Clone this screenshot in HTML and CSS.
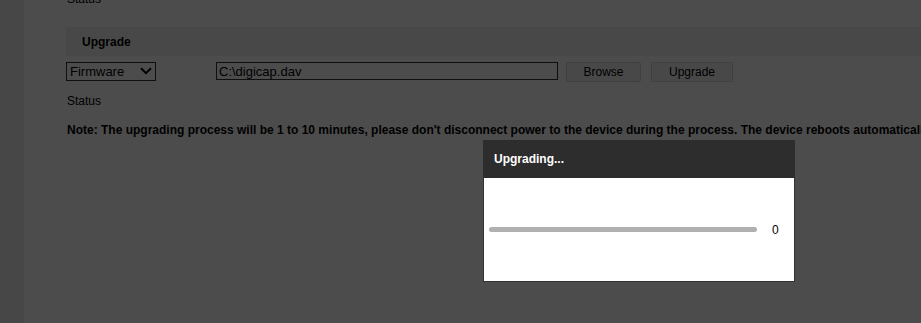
FILE: index.html
```html
<!DOCTYPE html>
<html lang="en">
<head>
    <meta charset="UTF-8">
    <meta name="viewport" content="width=device-width, initial-scale=1.0">
    <title>Upgrade</title>
    <link rel="stylesheet" href="styles.css">
</head>
<body>
    <div class="page">
        <div class="sidebar"></div>
        <div class="content">
            <div class="line status-top">Status</div>
            <div class="section-title">Upgrade</div>
            <div class="upgrade-row">
                <span class="select-wrap">
                    <select class="type-select">
                        <option>Firmware</option>
                    </select>
                    <svg class="chevron" width="12" height="8" viewBox="0 0 12 8">
                        <path d="M1 1.2 L6 6.2 L11 1.2" fill="none" stroke="#000" stroke-width="2"/>
                    </svg>
                </span>
                <input class="file-path" type="text" value="C:\digicap.dav">
                <button class="btn btn-browse">Browse</button>
                <button class="btn btn-upgrade">Upgrade</button>
            </div>
            <div class="line status">Status</div>
            <div class="line note">Note: The upgrading process will be 1 to 10 minutes, please don't disconnect power to the device during the process. The device reboots automatically after upgrading.</div>
        </div>
    </div>

    <div class="mask"></div>

    <div class="dialog">
        <div class="dialog-head">Upgrading...</div>
        <div class="dialog-body">
            <div class="progress"></div>
            <span class="progress-value">0</span>
        </div>
    </div>
</body>
</html>
```

FILE: styles.css
```css
* {
    box-sizing: border-box;
}

html, body {
    margin: 0;
    padding: 0;
    height: 100%;
    overflow: hidden;
    font-family: "Liberation Sans", Arial, sans-serif;
    font-size: 12px;
    color: #000;
    background: #fff;
}

.page {
    display: flex;
    min-height: 100%;
}

.sidebar {
    width: 24px;
    flex: none;
    background: #ededed;
}

.content {
    flex: 1;
    padding-left: 42px;
    white-space: nowrap;
}

.line {
    height: 20px;
    line-height: 20px;
    padding-left: 1px;
}

.status-top {
    margin-top: -11px;
}

.section-title {
    margin-top: 18px;
    height: 29px;
    line-height: 29px;
    padding: 1px 0 0 16px;
    font-weight: bold;
    background: #f1f1f1;
}

.upgrade-row {
    display: flex;
    align-items: flex-start;
    margin-top: 6px;
}

.select-wrap {
    position: relative;
    display: inline-block;
    width: 90px;
    height: 19px;
}

.type-select {
    appearance: none;
    -webkit-appearance: none;
    width: 90px;
    height: 19px;
    margin: 0;
    padding: 0 0 0 3px;
    border: 1px solid #333;
    border-radius: 0;
    background: #fff;
    font-family: "Liberation Sans", Arial, sans-serif;
    font-size: 13px;
    color: #000;
    line-height: 17px;
}

.chevron {
    position: absolute;
    left: 74px;
    top: 5px;
    pointer-events: none;
}

.file-path {
    margin: 0 0 0 60px;
    width: 342px;
    height: 18px;
    padding: 0 2px;
    border: 1px solid #333;
    border-radius: 0;
    font-family: "Liberation Sans", Arial, sans-serif;
    font-size: 13px;
    color: #000;
    background: #fff;
    outline: none;
}

.btn {
    margin-top: 0;
    height: 20px;
    padding: 0;
    border: 1px solid #d4d4d4;
    border-radius: 2px;
    background: #f2f2f2;
    font-family: "Liberation Sans", Arial, sans-serif;
    font-size: 12px;
    color: #000;
}

.btn-browse {
    margin-left: 8px;
    width: 75px;
}

.btn-upgrade {
    margin-left: 10px;
    width: 82px;
}

.status {
    margin-top: 9px;
}

.note {
    margin-top: 9px;
    font-weight: bold;
}

.mask {
    position: fixed;
    left: 0;
    top: 0;
    right: 0;
    bottom: 0;
    background: rgba(0, 0, 0, 0.7);
}

.dialog {
    position: fixed;
    left: 483px;
    top: 140px;
    width: 312px;
    height: 142px;
    display: flex;
    flex-direction: column;
    border: 1px solid #333;
    border-top: none;
    background: #fff;
}

.dialog-head {
    height: 38px;
    line-height: 38px;
    margin: 0 -1px;
    padding-left: 11px;
    background: #2d2d2d;
    color: #fff;
    font-weight: bold;
    font-size: 12px;
}

.dialog-body {
    flex: 1;
    display: flex;
    align-items: center;
    padding-left: 5px;
}

.progress {
    width: 268px;
    height: 5px;
    border-radius: 3px;
    background: #b0b0b0;
}

.progress-value {
    margin-left: 15px;
    font-size: 12px;
    color: #000;
}
```
